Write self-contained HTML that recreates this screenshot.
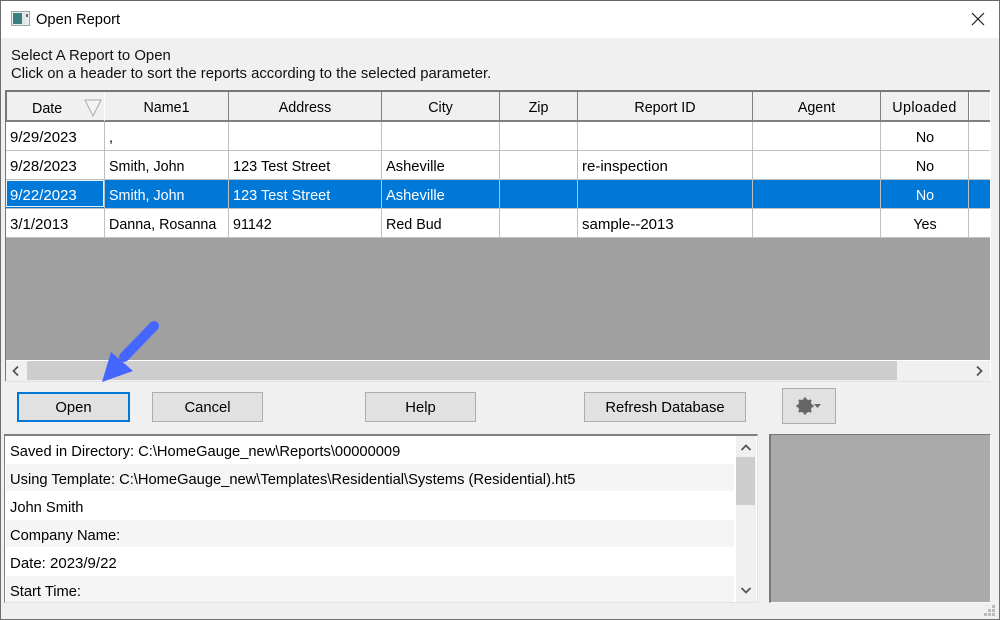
<!DOCTYPE html>
<html><head><meta charset="utf-8"><style>
html,body{margin:0;padding:0;width:1000px;height:620px;overflow:hidden;background:#f0f0f0}
body{font-family:"Liberation Sans",sans-serif;font-size:14px;color:#000;position:relative}
div,span{position:absolute;box-sizing:border-box}
.t{white-space:nowrap;line-height:18px}
.h{background:#f0f0f0;top:92px;height:30px;border-right:1px solid #808080;border-bottom:2px solid #808080;text-align:center;line-height:32px;font-size:14.3px}
.c{white-space:nowrap;line-height:30px;height:28px;font-size:14.3px}
.d{font-size:15px}
.v{width:1px;background:#c0c0c0;top:122px;height:116px}
.l{height:1px;left:6px;width:984px;background:#c0c0c0}
.b{background:#e1e1e1;border:1px solid #adadad;text-align:center;line-height:30px;height:30px;top:392px;font-size:14.8px}
.r{left:6px;width:728px;height:28px;line-height:32px;padding-left:4px;white-space:nowrap;font-size:14.7px}
.w{color:#fff}
</style></head><body>
<div style="left:0;top:0;width:1000px;height:620px;border:1px solid #6e6e6e;border-top-color:#666"></div>
<div style="left:1px;top:1px;width:998px;height:37px;background:#fff"></div>
<svg style="position:absolute;left:11px;top:11px" width="19" height="16"><rect x="0.5" y="0.5" width="18" height="14" fill="#e8ecec" stroke="#9aa"/><rect x="2" y="2" width="9" height="11" fill="#3c7f80"/><rect x="11" y="2" width="4" height="11" fill="#dfe8e4"/><rect x="15" y="3" width="2" height="3" fill="#667"/></svg>
<div class="t" style="left:36px;top:11px;font-size:14.7px">Open Report</div>
<svg style="position:absolute;left:971px;top:12px" width="14" height="14"><path d="M1 1L13 13M13 1L1 13" stroke="#111" stroke-width="1.1" fill="none"/></svg>
<div class="t" style="left:11px;top:47px;font-size:14.9px;color:#111">Select A Report to Open</div>
<div class="t" style="left:11px;top:65px;font-size:14.85px;color:#111">Click on a header to sort the reports according to the selected parameter.</div>

<!-- grid -->
<div style="left:5px;top:90px;width:985px;height:291px;background:#a0a0a0;border-top:2px solid #777;border-left:1px solid #777"></div>
<div style="left:6px;top:92px;width:1px;height:30px;background:#777"></div>
<div style="left:7px;top:92px;width:983px;height:30px;background:#f0f0f0"></div>
<div style="left:990px;top:90px;width:1px;height:291px;background:#fff"></div>
<div style="left:6px;top:122px;width:984px;height:116px;background:#fff"></div>
<div style="left:6px;top:180px;width:984px;height:28px;background:#0078d7"></div>
<div class="h" style="left:7px;width:98px;border-right:1px solid #fff;text-align:left;padding-left:25px;line-height:34px">Date</div>
<svg style="position:absolute;left:84px;top:99px" width="19" height="19"><path d="M1 1H17L9 17Z" fill="#f4f4f4" stroke="#aaa"/></svg>
<div class="h" style="left:105px;width:124px">Name1</div>
<div class="h" style="left:229px;width:153px">Address</div>
<div class="h" style="left:382px;width:118px">City</div>
<div class="h" style="left:500px;width:78px">Zip</div>
<div class="h" style="left:578px;width:175px">Report ID</div>
<div class="h" style="left:753px;width:128px">Agent</div>
<div class="h" style="left:881px;width:88px;letter-spacing:.4px">Uploaded</div>
<div class="h" style="left:969px;width:21px;border-right:none"></div>
<div style="left:969px;top:92px;width:1px;height:28px;background:#fff"></div>

<div class="v" style="left:104px"></div><div class="v" style="left:228px"></div><div class="v" style="left:381px"></div><div class="v" style="left:499px"></div><div class="v" style="left:577px"></div><div class="v" style="left:752px"></div><div class="v" style="left:880px"></div><div class="v" style="left:968px"></div>
<div class="l" style="top:150px"></div><div class="l" style="top:179px"></div><div class="l" style="top:208px"></div><div class="l" style="top:237px"></div>
<div style="left:6px;top:180px;width:98px;height:27px;border:1px solid #e8f0f8"></div>

<div class="c d" style="left:10px;top:123px">9/29/2023</div><div class="c" style="left:109px;top:123px">,</div><div class="c" style="left:881px;width:88px;text-align:center;top:123px">No</div>
<div class="c d" style="left:10px;top:152px">9/28/2023</div><div class="c" style="left:109px;top:152px">Smith, John</div><div class="c" style="left:233px;top:152px;font-size:14.5px">123 Test Street</div><div class="c" style="left:386px;top:152px;font-size:14.7px">Asheville</div><div class="c d" style="left:582px;top:152px">re-inspection</div><div class="c" style="left:881px;width:88px;text-align:center;top:152px">No</div>
<div class="c d w" style="left:10px;top:181px">9/22/2023</div><div class="c w" style="left:109px;top:181px">Smith, John</div><div class="c w" style="left:233px;top:181px;font-size:14.5px">123 Test Street</div><div class="c w" style="left:386px;top:181px;font-size:14.7px">Asheville</div><div class="c w" style="left:881px;width:88px;text-align:center;top:181px">No</div>
<div class="c d" style="left:10px;top:210px">3/1/2013</div><div class="c" style="left:109px;top:210px">Danna, Rosanna</div><div class="c" style="left:233px;top:210px">91142</div><div class="c" style="left:386px;top:210px">Red Bud</div><div class="c d" style="left:582px;top:210px">sample--2013</div><div class="c" style="left:881px;width:88px;text-align:center;top:210px">Yes</div>

<!-- h scroll -->
<div style="left:6px;top:360px;width:984px;height:1px;background:#fff"></div>
<div style="left:6px;top:361px;width:984px;height:20px;background:#f0f0f0"></div>
<div style="left:27px;top:361px;width:870px;height:19px;background:#cdcdcd"></div>
<div style="left:5px;top:381px;width:986px;height:1px;background:#e3e3e3"></div>
<svg style="position:absolute;left:11px;top:365px" width="10" height="12"><path d="M7 1.5L2.5 6L7 10.5" stroke="#555" stroke-width="1.8" fill="none"/></svg>
<svg style="position:absolute;left:974px;top:365px" width="10" height="12"><path d="M3 1.5L7.5 6L3 10.5" stroke="#555" stroke-width="1.8" fill="none"/></svg>

<!-- buttons -->
<div class="b" style="left:17px;width:113px;border:2px solid #0078d7;line-height:28px">Open</div>
<div class="b" style="left:152px;width:111px">Cancel</div>
<div class="b" style="left:365px;width:111px">Help</div>
<div class="b" style="left:584px;width:162px">Refresh Database</div>
<div class="b" style="left:782px;width:54px;height:36px;top:388px"></div>
<svg style="position:absolute;left:796px;top:397px" width="26" height="18" viewBox="0 0 26 18"><circle cx="9" cy="9" r="5" fill="none" stroke="#666" stroke-width="3.8"/><path d="M9 0.5V17.5M0.5 9H17.5M3 3L15 15M15 3L3 15" stroke="#666" stroke-width="2.6"/><path d="M18 7H25L21.5 11Z" fill="#666"/></svg>

<!-- arrow -->
<svg style="position:absolute;left:95px;top:315px" width="70" height="70"><path d="M59 11L29 42" stroke="#4466ff" stroke-width="10" stroke-linecap="round" fill="none"/><path d="M16 37L38 56L7 67Z" fill="#4466ff"/></svg>

<!-- info list -->
<div style="left:4px;top:434px;width:754px;height:169px;background:#fff;border:1px solid #e3e3e3;border-top:2px solid #808080;border-left:1px solid #808080"></div>
<div class="r" style="top:436px">Saved in Directory: C:\HomeGauge_new\Reports\00000009</div>
<div class="r" style="top:464px;height:27px;background:#f5f5f5">Using Template: C:\HomeGauge_new\Templates\Residential\Systems (Residential).ht5</div>
<div class="r" style="top:492px">John Smith</div>
<div class="r" style="top:520px;height:27px;background:#f5f5f5">Company Name:</div>
<div class="r" style="top:548px;height:28px;font-size:15px;line-height:31px">Date: 2023/9/22</div>
<div class="r" style="top:576px;height:26px;background:#f5f5f5">Start Time:</div>
<div style="left:736px;top:436px;width:20px;height:166px;background:#f0f0f0"></div>
<div style="left:736px;top:457px;width:19px;height:48px;background:#cdcdcd"></div>
<svg style="position:absolute;left:740px;top:443px" width="12" height="10"><path d="M1.5 7L6 2.5L10.5 7" stroke="#555" stroke-width="1.8" fill="none"/></svg>
<svg style="position:absolute;left:740px;top:585px" width="12" height="10"><path d="M1.5 3L6 7.5L10.5 3" stroke="#555" stroke-width="1.8" fill="none"/></svg>

<!-- right panel -->
<div style="left:769px;top:434px;width:222px;height:169px;background:#aaa;border-top:1px solid #777;border-left:2px solid #777;border-right:1px solid #f8f8f8;border-bottom:1px solid #f8f8f8"></div>

<!-- grip -->
<svg style="position:absolute;left:984px;top:604px" width="12" height="12" fill="#bbb"><rect x="8" y="1" width="3" height="3"/><rect x="4" y="5" width="3" height="3"/><rect x="8" y="5" width="3" height="3"/><rect x="0" y="9" width="3" height="3"/><rect x="4" y="9" width="3" height="3"/><rect x="8" y="9" width="3" height="3"/></svg>
</body></html>
